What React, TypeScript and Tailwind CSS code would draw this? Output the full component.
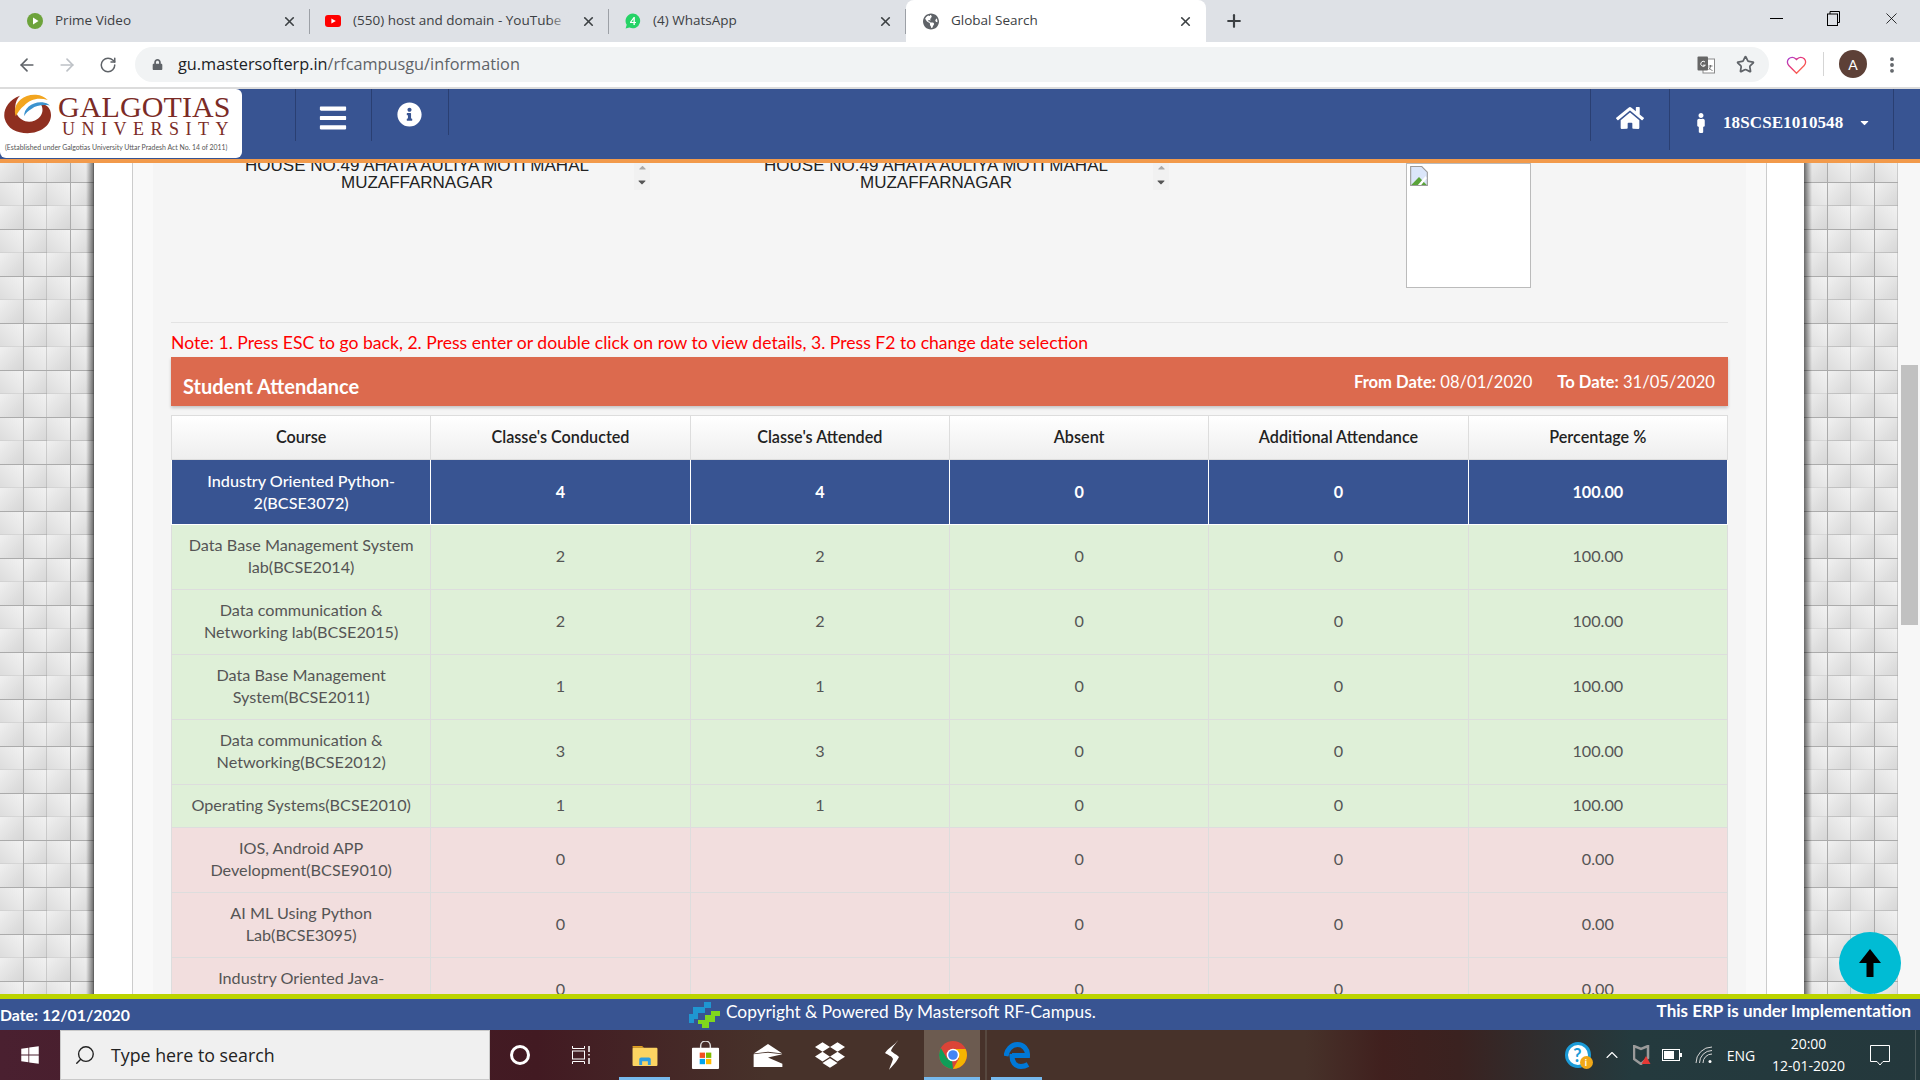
import React from "react";
import { FaBars, FaInfoCircle, FaHome, FaMale, FaCaretDown, FaCaretUp, FaGlobeAmericas, FaLock, FaWindows, FaDropbox } from "react-icons/fa";
import { ArrowLeft, ArrowRight, RotateCw, X, Plus, Star, Search, ChevronUp, EllipsisVertical } from "lucide-react";

type Row = {
  course: string;
  conducted: string;
  attended: string;
  absent: string;
  additional: string;
  percent: string;
  kind: "active" | "ok" | "low";
};

const rows: Row[] = [
  { course: "Industry Oriented Python-\n2(BCSE3072)", conducted: "4", attended: "4", absent: "0", additional: "0", percent: "100.00", kind: "active" },
  { course: "Data Base Management System\nlab(BCSE2014)", conducted: "2", attended: "2", absent: "0", additional: "0", percent: "100.00", kind: "ok" },
  { course: "Data communication &\nNetworking lab(BCSE2015)", conducted: "2", attended: "2", absent: "0", additional: "0", percent: "100.00", kind: "ok" },
  { course: "Data Base Management\nSystem(BCSE2011)", conducted: "1", attended: "1", absent: "0", additional: "0", percent: "100.00", kind: "ok" },
  { course: "Data communication &\nNetworking(BCSE2012)", conducted: "3", attended: "3", absent: "0", additional: "0", percent: "100.00", kind: "ok" },
  { course: "Operating Systems(BCSE2010)", conducted: "1", attended: "1", absent: "0", additional: "0", percent: "100.00", kind: "ok" },
  { course: "IOS, Android APP\nDevelopment(BCSE9010)", conducted: "0", attended: "", absent: "0", additional: "0", percent: "0.00", kind: "low" },
  { course: "AI ML Using Python\nLab(BCSE3095)", conducted: "0", attended: "", absent: "0", additional: "0", percent: "0.00", kind: "low" },
  { course: "Industry Oriented Java-\n\u00a0", conducted: "0", attended: "", absent: "0", additional: "0", percent: "0.00", kind: "low" },
];

const columns = ["Course", "Classe's Conducted", "Classe's Attended", "Absent", "Additional Attendance", "Percentage %"];

const rowClass = {
  active: "bg-[#385492] text-white font-medium",
  ok: "bg-[#dff0d8] text-[#555]",
  low: "bg-[#f2dede] text-[#555]",
};

function Tile({ id, side }: { id: string; side: "left" | "right" }) {
  return (
    <svg className="block h-full w-full" aria-hidden="true">
      <defs>
        <linearGradient id={`${id}-a`} x1="0" y1="0" x2="1" y2="1">
          <stop offset="0" stopColor="#f0f0f0" />
          <stop offset="1" stopColor="#d6d6d6" />
        </linearGradient>
        <linearGradient id={`${id}-b`} x1="1" y1="0" x2="0" y2="1">
          <stop offset="0" stopColor="#f2f2f2" />
          <stop offset="1" stopColor="#dcdcdc" />
        </linearGradient>
        <linearGradient id={`${id}-edge`} x1={side === "left" ? "0" : "1"} y1="0" x2={side === "left" ? "1" : "0"} y2="0">
          <stop offset="0" stopColor="#000" stopOpacity="0" />
          <stop offset="1" stopColor="#000" stopOpacity="0.55" />
        </linearGradient>
        <pattern id={`${id}-p`} width="47" height="47" patternUnits="userSpaceOnUse" patternTransform="translate(0,-4)">
          <rect width="47" height="47" fill="#e0e0e0" />
          <rect x="0" y="0" width="23" height="23" fill={`url(#${id}-a)`} />
          <rect x="24" y="0" width="23" height="23" fill={`url(#${id}-b)`} />
          <rect x="0" y="24" width="23" height="23" fill={`url(#${id}-b)`} />
          <rect x="24" y="24" width="23" height="23" fill={`url(#${id}-a)`} />
          <path d="M23.5 0V23M47 0V47M0 23.5H47M23.5 24V47" stroke="#ababab" strokeWidth="1" fill="none" />
          <path d="M0 47H23" stroke="#c8c8c8" strokeWidth="1" />
          <path d="M24 47H47" stroke="#a4a4a4" strokeWidth="1" />
        </pattern>
      </defs>
      <rect width="100%" height="100%" fill={`url(#${id}-p)`} />
      <rect x={side === "left" ? 86 : 0} width="8" height="100%" fill={`url(#${id}-edge)`} />
    </svg>
  );
}

function Tab({ width, left, icon, title, fade, active }: { width: string; left: string; icon: React.ReactNode; title: string; fade?: boolean; active?: boolean }) {
  return (
    <div className={`${width} ${left} ${active ? "bg-white rounded-t-lg" : ""} flex h-full items-center pr-[13px] gap-3 relative`}>
      <div className="w-4 h-4 shrink-0 flex items-center justify-center">{icon}</div>
      <div className="relative flex-1 overflow-hidden whitespace-nowrap text-[13.5px] text-[#3c4043] -mt-px font-['Open_Sans',sans-serif]">
        {title}
        {fade && <div className="absolute right-0 top-0 bottom-0 w-5 bg-gradient-to-r from-transparent to-[#dee1e6]" />}
      </div>
      <X size={15} strokeWidth={2.6} className="text-[#3c4043]" />
      {!active && <div className="absolute right-0 top-[9px] h-[25px] w-px bg-[#9ca0a6]" />}
    </div>
  );
}

function TabStrip() {
  return (
    <div className="h-[42px] bg-[#dee1e6] flex shrink-0">
      <Tab
        width="w-[310px]"
        left="pl-[27px]"
        title="Prime Video"
        icon={
          <svg viewBox="0 0 16 16" className="w-[18px] h-[18px]">
            <circle cx="8" cy="8" r="8" fill="#6da33b" />
            <path d="M6 4.5 11.5 8 6 11.5Z" fill="#fff" />
          </svg>
        }
      />
      <Tab
        width="w-[299px]"
        left="pl-[15px]"
        title="(550) host and domain - YouTube"
        fade
        icon={
          <svg viewBox="0 0 16 12" className="w-[18px] h-[14px]">
            <rect width="16" height="12" rx="3" fill="#f00" />
            <path d="M6.4 3.4 10.8 6 6.4 8.6Z" fill="#fff" />
          </svg>
        }
      />
      <Tab
        width="w-[297px]"
        left="pl-[16px]"
        title="(4) WhatsApp"
        icon={
          <svg viewBox="0 0 16 16" className="w-[18px] h-[18px]">
            <path d="M8 .5a7.4 7.4 0 0 0-6.3 11.300L.6 15.500l3.800-1A7.400 7.400 0 1 0 8 .5Z" fill="#25d366" />
            <path d="M8.700 4 5 9v1h3.500v2h1.300v-2h1.200V8.900H9.800V4H8.700Zm-.2 2v2.900H6.400L8.500 6Z" fill="#fff" />
          </svg>
        }
      />
      <Tab
        width="w-[300px]"
        left="pl-[17px]"
        active
        title="Global Search"
        icon={<FaGlobeAmericas size={17} className="text-[#5f6368]" />}
      />
      <div className="w-[56px] flex items-center justify-center">
        <Plus size={20} strokeWidth={2.6} className="text-[#3c4043]" />
      </div>
      <div className="flex-1 flex items-center justify-end -mt-[6px]">
        <div className="w-[56px] flex justify-center">
          <div className="w-[13px] h-px bg-black" />
        </div>
        <div className="w-[58px] flex justify-center">
          <svg viewBox="0 0 13 15" className="w-[13px] h-[15px]" fill="none" stroke="#000">
            <rect x="0.5" y="3" width="10" height="11.500" />
            <path d="M3 3V.5h9.500V11.500H10.500" />
          </svg>
        </div>
        <div className="w-[58px] flex justify-center">
          <X size={19} strokeWidth={1} className="text-black" />
        </div>
      </div>
    </div>
  );
}

function Toolbar() {
  return (
    <div className="h-[47px] bg-white border-b-2 border-[#dcdcdc] flex items-start shrink-0 pt-[5px]">
      <div className="w-[47px] h-[35px] flex items-center justify-end pr-[10px]">
        <ArrowLeft size={20} className="text-[#5f6368]" />
      </div>
      <div className="w-[40px] h-[35px] flex items-center justify-end pr-[10px]">
        <ArrowRight size={20} className="text-[#bdc1c6]" />
      </div>
      <div className="w-[40px] h-[35px] flex items-center justify-end pr-[10px]">
        <RotateCw size={18} className="text-[#5f6368]" />
      </div>
      <div className="ml-[8px] w-[1634px] h-[35px] rounded-full bg-[#f1f3f4] flex items-center pl-[17px] pr-[14px]">
        <FaLock size={11} className="text-[#5f6368]" />
        <div className="ml-[15px] text-[16.3px] text-[#202124] whitespace-nowrap font-['Open_Sans',sans-serif]">
          gu.mastersofterp.in<span className="text-[#5f6368]">/rfcampusgu/information</span>
        </div>
        <svg viewBox="0 0 18 18" className="ml-auto mr-[21px] w-[18px] h-[18px]">
          <rect x="6" y="3" width="11.500" height="14" fill="#fff" stroke="#8a8a8a" />
          <rect x="0.5" y="0.5" width="10.500" height="14" rx="1" fill="#666" />
          <path d="M8 6a2.500 2.500 0 1 0 .4 3.200H6" fill="none" stroke="#fff" strokeWidth="1" />
          <path d="M11.500 10h4M13.500 9v1c0 2-1 3-2 4M12 11.500c.5 1.500 2 2.500 3.500 3" fill="none" stroke="#666" strokeWidth="0.9" />
        </svg>
        <Star size={19} strokeWidth={2.2} className="text-[#5f6368]" />
      </div>
      <div className="ml-[17px] h-[35px] flex items-center">
        <svg viewBox="0 0 24 22" className="w-[21px] h-[20px]" fill="none" strokeWidth="1.500">
          <defs>
            <linearGradient id="heart-stroke" x1="0" y1="0" x2="1" y2="1">
              <stop offset="0" stopColor="#a43fd8" />
              <stop offset="0.5" stopColor="#f0366a" />
              <stop offset="1" stopColor="#ff8a3c" />
            </linearGradient>
          </defs>
          <path d="M12 20.500 3.200 11.600a5.500 5.500 0 0 1 7.800-7.800l1 1 1-1a5.500 5.500 0 0 1 7.800 7.800Z" stroke="url(#heart-stroke)" />
        </svg>
      </div>
      <div className="ml-[16px] mt-[5px] h-[24px] w-px bg-[#d5d5d5]" />
      <div className="ml-[15px] mt-[3px] w-[28px] h-[28px] rounded-full bg-[#5d4037] text-white text-[14px] flex items-center justify-center">A</div>
      <div className="ml-[15px] h-[35px] flex items-center">
        <EllipsisVertical size={20} strokeWidth={2.6} className="text-[#5f6368]" />
      </div>
    </div>
  );
}

function Swirl() {
  return (
    <svg viewBox="0 0 44 36" className="w-[47px] h-[40px] shrink-0">
      <path d="M15 1C4 5-1 14 .5 22 3 32 12 36 22 36c12 0 22-7 22-17 0-6-4-10-10-11 4 6 2 13-5 16-7 3-14 0-17-6-3-7-1-13 3-17Z" fill="#8f2f20" />
      <path d="M11 20C7 9 18-1 30 0c5 .5 8 2 11 5-8-3-17-1-22 5-4 3-6 7-8 10Z" fill="#f2a51f" />
      <path d="M19 20c-1-7 8-14 17-13 3 .5 5 1 7 3-7-1-13 0-17 3-3 2-6 4-7 7Z" fill="#3c93cf" />
    </svg>
  );
}

function Logo() {
  return (
    <div className="w-[242px] h-[69px] bg-white rounded-b-md rounded-tr-md shrink-0 flex flex-col pl-[4px] pt-[4px] overflow-hidden">
      <div className="flex gap-[7px] h-[45px]">
        <div className="pt-[1px]">
          <Swirl />
        </div>
        <div className="font-['Liberation_Serif',serif] text-[#7b2b26]">
          <div className="text-[30px] tracking-[0.1px] leading-[27px] h-[27px]">GALGOTIAS</div>
          <div className="text-[18px] tracking-[6.5px] leading-[18px] pl-[4px]">UNIVERSITY</div>
        </div>
      </div>
      <div className="text-[6.9px] leading-[9px] pl-[1px] text-[#555] whitespace-nowrap font-['Lato',sans-serif] mt-[5px]">(Established under Galgotias University Uttar Pradesh Act No. 14 of 2011)</div>
    </div>
  );
}

function Header() {
  return (
    <div className="h-[74px] bg-[#385492] border-b-4 border-[#f29a4b] flex shrink-0 items-start relative z-10">
      <Logo />
      <div className="ml-[53px] w-[76px] h-[52px] border-l border-[#2a3f72] flex justify-center pt-[14px] pr-[2px] text-white">
        <FaBars size={30} />
      </div>
      <div className="w-[77px] h-[52px] border-l border-[#2a3f72] flex justify-center pt-[13px] pr-[2px] text-white">
        <FaInfoCircle size={25} />
      </div>
      <div className="h-[46px] border-l border-[#2a3f72]" />
      <div className="ml-auto w-[79px] h-[52px] border-l border-[#2a3f72] flex justify-center pt-[15px] text-white">
        <FaHome size={28} />
      </div>
      <div className="w-[225px] h-[61px] border-x border-[#2a3f72] flex items-center pt-[6px] text-white pl-[21px]">
        <FaMale size={20} />
        <span className="ml-[12px] font-['Liberation_Serif',serif] font-bold text-[17px] tracking-[0.1px]">18SCSE1010548</span>
        <FaCaretDown size={13} className="ml-[15px]" />
      </div>
      <div className="w-[26px]" />
    </div>
  );
}

function AddressBox() {
  return (
    <div className="w-[452px] flex text-[#222]">
      <div className="flex-1 text-center text-[17px] leading-[17px] -mt-[6px] pl-[2px] font-['Liberation_Sans',sans-serif] font-light">
        HOUSE NO.49 AHATA AULIYA MOTI MAHAL
        <br />
        MUZAFFARNAGAR
      </div>
      <div className="w-4 h-[27px] flex flex-col items-center text-[#777] bg-[#f1f1f1]">
        <FaCaretUp size={11} className="text-[#aaa] mt-[-1px]" />
        <FaCaretDown size={12} className="text-[#555] mt-[3px]" />
      </div>
    </div>
  );
}

function AttendanceTable() {
  return (
    <table className="w-full table-fixed border-collapse text-[16.2px] leading-[22px] text-center">
      <thead>
        <tr className="bg-gradient-to-b from-white to-[#eeeeee]">
          {columns.map((c) => (
            <th key={c} className="border border-[#dddddd] font-semibold text-[#222] h-[44px] px-2 pb-[2px]">{c}</th>
          ))}
        </tr>
      </thead>
      <tbody>
        {rows.map((r) => (
          <tr key={r.course} className={rowClass[r.kind]}>
            <td className={`border ${r.kind === "active" ? "border-white pt-[10px] pb-[10px]" : "border-[#dddddd] pt-[9px] pb-[11px]"} px-2 whitespace-pre-line`}>{r.course}</td>
            {[r.conducted, r.attended, r.absent, r.additional, r.percent].map((v, i) => (
              <td key={i} className={`border ${r.kind === "active" ? "border-white font-bold" : "border-[#dddddd] pb-[2px]"} px-2`}>{v}</td>
            ))}
          </tr>
        ))}
      </tbody>
    </table>
  );
}

function Main() {
  return (
    <div className="flex-1 flex overflow-hidden relative min-h-0">
      <div className="w-[94px] shrink-0"><Tile id="left" side="left" /></div>
      <div className="w-[38px] shrink-0 bg-white" />
      <div className="w-[1635px] shrink-0 border-x border-[#cccccc] bg-[#f9f9f9] px-[20px]">
        <div className="bg-[#f5f5f5] h-full px-[18px]">
          <div className="flex h-[160px] pl-[27px] gap-[67px] border-b border-[#e3e3e3]">
            <AddressBox />
            <AddressBox />
            <div className="ml-[170px] w-[125px] h-[125px] bg-white border border-[#bbbbbb] p-[2px]">
              <svg viewBox="0 0 16 18" className="w-[20px] h-[20px]">
                <path d="M.5.5h10l5 5v12H.5Z" fill="#dbe6fa" stroke="#9a9a9a" />
                <path d="M1 17 8 10l7 7Z" fill="#5aa33a" />
                <path d="M14 9 7 17h3l5-6Z" fill="#fff" />
              </svg>
            </div>
          </div>
          <div className="h-[34px] flex items-center text-[17.6px] text-[#ff0000] pt-[6px] whitespace-nowrap">
            Note: 1. Press ESC to go back, 2. Press enter or double click on row to view details, 3. Press F2 to change date selection
          </div>
          <div className="h-[49px] bg-[#dc6a4e] shadow-[0_2px_3px_rgba(0,0,0,0.2)] flex items-start text-white pl-[12px] pr-[13px]">
            <div className="text-[20px] font-bold mt-[14px]">Student Attendance</div>
            <div className="ml-auto text-[16.6px] mt-[13px]">
              <b>From Date:</b> 08/01/2020
            </div>
            <div className="ml-[25px] text-[16.6px] mt-[13px]">
              <b>To Date:</b> 31/05/2020
            </div>
          </div>
          <div className="mt-[9px]">
            <AttendanceTable />
          </div>
        </div>
      </div>
      <div className="w-[37px] shrink-0 bg-white" />
      <div className="w-[94px] shrink-0"><Tile id="right" side="right" /></div>
      <div className="w-[22px] shrink-0 bg-[#f7f7f7] pt-[202px] pl-[3px]">
        <div className="w-[17px] h-[260px] bg-[#c1c1c1]" />
      </div>
      <div className="absolute right-[19px] top-[769px] w-[62px] h-[62px] rounded-full bg-[#00bcd4] flex items-center justify-center">
        <svg viewBox="0 0 22 28" className="w-[22px] h-[28px]">
          <path d="M11 0 22 14H14.500V28H7.500V14H0Z" fill="#000" />
        </svg>
      </div>
    </div>
  );
}

function Footer() {
  return (
    <div className="shrink-0 bg-[#385492] border-t-[5px] border-[#bcd400] h-[36px] flex items-center text-white">
      <div className="w-[689px] text-[15.8px] font-bold pt-px">Date: 12/01/2020</div>
      <svg viewBox="0 0 31 26" className="w-[31px] h-[26px]">
        <path d="M9 5h6V0h7v6h-6v5H9v6H5v4H0v-9h4V5Z" fill="#1f96d1" />
        <path d="M16 13h6V9h9v5h-5v6h-6v6h-7v-4h-4v-4h7Z" fill="#7fd61d" />
      </svg>
      <div className="ml-[6px] text-[17.3px] -mt-[6px] whitespace-nowrap">Copyright &amp; Powered By Mastersoft RF-Campus.</div>
      <div className="ml-auto pr-[9px] text-[17px] font-bold -mt-[8px] whitespace-nowrap">This ERP is under Implementation</div>
    </div>
  );
}

function Slot({ width, active, shade, children }: { width: string; active?: boolean; shade?: boolean; children: React.ReactNode }) {
  return (
    <div className={`${width} ${shade ? "bg-[#6c5b50]" : ""} ${active ? "border-b-[3px] border-[#76b9ed] pt-[3px]" : ""} h-full flex items-center justify-center text-white shrink-0`}>
      {children}
    </div>
  );
}

function Taskbar() {
  return (
    <div className="h-[50px] shrink-0 flex text-white bg-[linear-gradient(90deg,#4a2030_0%,#421a22_28%,#47322a_40%,#47322a_68%,#40201e_72%,#3a2220_76%,#243a3e_85%,#24383c_100%)]">
      <Slot width="w-[60px]"><FaWindows size={20} /></Slot>
      <div className="w-[430px] bg-[#f0f0f0] border border-[#c9c9c9] flex items-center pl-[13px] text-[#222]">
        <Search size={22} strokeWidth={1.5} className="-scale-x-100" />
        <span className="ml-[15px] text-[17.8px] font-['Open_Sans',sans-serif]">Type here to search</span>
      </div>
      <Slot width="w-[60px]">
        <div className="w-[20px] h-[20px] rounded-full border-[3px] border-white" />
      </Slot>
      <Slot width="w-[69px]">
        <svg viewBox="0 0 20 20" className="w-[20px] h-[20px] -ml-[7px]" fill="none" stroke="#fff">
          <path d="M1.500 1v2.500h12V1M1.500 19v-2.500h12V19" />
          <rect x="1.500" y="6" width="12" height="8" />
          <path d="M18 1v6M18 9v1.500M18 13v6" strokeWidth="1.500" />
        </svg>
      </Slot>
      <Slot width="w-[51px]" active>
        <svg viewBox="0 0 28 24" className="w-[28px] h-[23px]">
          <path d="M1 2h10l2 2H1Z" fill="#e0a020" />
          <rect x="1" y="4" width="26" height="19" rx="1" fill="#fcd462" />
          <path d="M8 22v-6a2 2 0 0 1 2-2h8a2 2 0 0 1 2 2v6h-3v-4h-6v4Z" fill="#2f9de0" />
        </svg>
      </Slot>
      <Slot width="w-[70px]">
        <svg viewBox="0 0 30 30" className="w-[29px] h-[29px]">
          <path d="M10 8V5a5 5 0 0 1 10 0v3" fill="none" stroke="#ddd" strokeWidth="1.500" />
          <rect x="1" y="7" width="28" height="22" rx="1" fill="#fff" />
          <rect x="9" y="12" width="5.500" height="5.500" fill="#f25022" />
          <rect x="15.500" y="12" width="5.500" height="5.500" fill="#7fba00" />
          <rect x="9" y="18.500" width="5.500" height="5.500" fill="#00a4ef" />
          <rect x="15.500" y="18.500" width="5.500" height="5.500" fill="#ffb900" />
        </svg>
      </Slot>
      <Slot width="w-[56px]">
        <svg viewBox="0 0 30 24" className="w-[30px] h-[23px]" fill="#fff">
          <path d="M0 10 15 0l15 10L15 8Z" />
          <path d="M0 10.800 15 9l15 1.800-15 3.200 15 6.500V24H0Z" />
        </svg>
      </Slot>
      <Slot width="w-[68px]"><FaDropbox size={30} /></Slot>
      <Slot width="w-[56px]">
        <svg viewBox="0 0 14 30" className="w-[14px] h-[30px]" fill="#fff">
          <path d="M13 0C10 5 3 8 0 13c3 2 7 3 8 6-1 4-3 7-4 11 3-4 7-7 10-13-3-3-6-4-8-6 1-4 5-7 7-11Z" />
        </svg>
      </Slot>
      <div className="w-[4px]" />
      <Slot width="w-[56px]" active shade>
        <svg viewBox="0 0 28 28" className="w-[28px] h-[28px] ml-[2px]">
          <circle cx="14" cy="14" r="14" fill="#db4437" />
          <path d="M14 28A14 14 0 0 1 1.900 7L8 17.500l5 1.500Z" fill="#0f9d58" />
          <path d="M14 28l6-10.500L14 8h12.600A14 14 0 0 1 14 28Z" fill="#f4b400" />
          <circle cx="14" cy="14" r="6.300" fill="#fff" />
          <circle cx="14" cy="14" r="4.800" fill="#4285f4" />
        </svg>
      </Slot>
      <div className="w-[11px] flex pl-[5px]"><div className="w-[2px] bg-[#57483f]" /></div>
      <Slot width="w-[51px]" active>
        <svg viewBox="0 0 26 27" className="w-[26px] h-[27px]" fill="none" stroke="#0078d7" strokeWidth="5">
          <path d="M8 13.500h15.500c.3-6-4-11-10-11C7 2.500 3 8 2 14" />
          <path d="M8 12c-.5 8 3 12.500 9 12.500 3 0 5-.8 7-2" />
        </svg>
      </Slot>
      <div className="flex-1" />
      <Slot width="w-[35px]">
        <div className="relative w-[26px] h-[26px] rounded-full bg-white border-[3px] border-[#1b9bd8] text-[#1b9bd8] text-[18px] font-bold flex items-center justify-center">
          ?
          <div className="absolute -right-[5px] -bottom-[4px] w-[13px] h-[13px] rounded-full bg-[#f0a818] text-white text-[9px] flex items-center justify-center">i</div>
        </div>
      </Slot>
      <Slot width="w-[33px]"><ChevronUp size={20} strokeWidth={1.3} /></Slot>
      <Slot width="w-[27px]">
        <svg viewBox="0 0 18 20" className="w-[18px] h-[20px]">
          <path d="M1 1l7 3 7-3v12l-7 6-7-5Z" fill="none" stroke="#9a9a9a" strokeWidth="2.500" />
          <path d="M13 11l4.500 8h-9Z" fill="#e53935" />
        </svg>
      </Slot>
      <Slot width="w-[33px]">
        <svg viewBox="0 0 20 12" className="w-[20px] h-[12px]">
          <rect x="0.500" y="0.500" width="17" height="11" fill="none" stroke="#fff" />
          <rect x="2" y="2" width="10" height="8" fill="#fff" />
          <rect x="18" y="4" width="2" height="4" fill="#fff" />
        </svg>
      </Slot>
      <Slot width="w-[32px]">
        <svg viewBox="0 0 18 18" className="w-[18px] h-[18px]" fill="none" stroke="#d8d8d8" strokeWidth="1">
          <path d="M1 17A16 16 0 0 1 17 1M4.500 17A12.500 12.500 0 0 1 17 4.500M8 17a9 9 0 0 1 9-9" />
          <circle cx="15" cy="15.500" r="1.500" fill="#fff" stroke="none" />
        </svg>
      </Slot>
      <Slot width="w-[42px]"><span className="text-[14px] font-['Open_Sans',sans-serif]">ENG</span></Slot>
      <div className="w-[93px] flex flex-col items-center justify-center text-[14px] leading-[22px] font-['Open_Sans',sans-serif]">
        <div>20:00</div>
        <div>12-01-2020</div>
      </div>
      <Slot width="w-[50px]">
        <svg viewBox="0 0 20 21" className="w-[20px] h-[21px]" fill="none" stroke="#fff">
          <path d="M.5.5h19v16H13l-3 3.500-3-3.500H.5Z" />
        </svg>
      </Slot>
      <div className="w-[15px] flex justify-end pr-[4px]"><div className="w-px bg-[#4c5a5c]" /></div>
    </div>
  );
}

export default function App() {
  return (
    <div className="w-[1920px] h-screen flex flex-col overflow-hidden font-['Lato',sans-serif] bg-white">
      <TabStrip />
      <Toolbar />
      <Header />
      <Main />
      <Footer />
      <Taskbar />
    </div>
  );
}
